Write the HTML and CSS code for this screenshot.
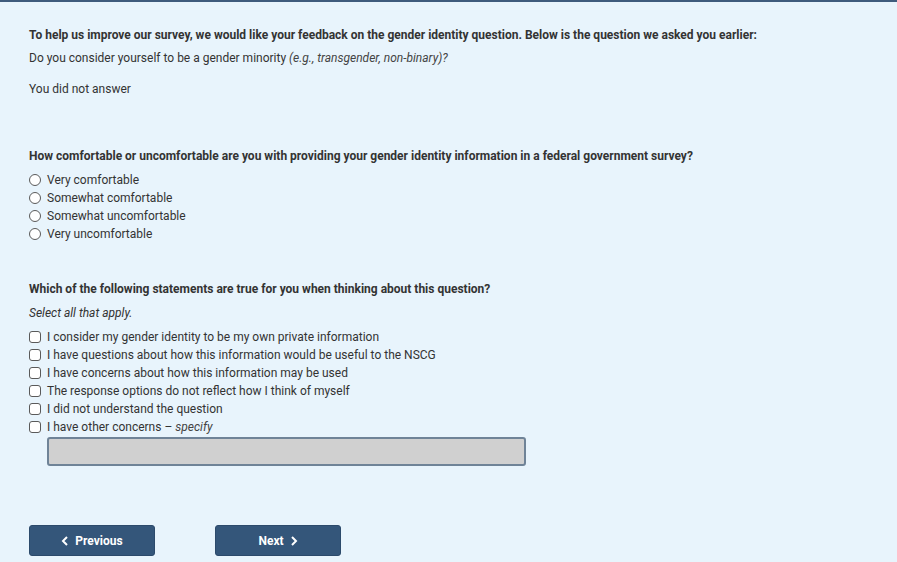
FILE: index.html
```html
<!DOCTYPE html>
<html lang="en">
<head>
    <meta charset="UTF-8">
    <meta name="viewport" content="width=device-width, initial-scale=1.0">
    <title>Gender Identity Feedback</title>
    <link rel="stylesheet" href="styles.css">
</head>
<body>
    <div class="page">
        <p class="intro">To help us improve our survey, we would like your feedback on the gender identity question. Below is the question we asked you earlier:</p>
        <p class="asked">Do you consider yourself to be a gender minority <em>(e.g., transgender, non-binary)?</em></p>
        <p class="answer">You did not answer</p>

        <p class="question q-comfort">How comfortable or uncomfortable are you with providing your gender identity information in a federal government survey?</p>
        <div class="options">
            <label class="option"><input type="radio" name="comfort"><span>Very comfortable</span></label>
            <label class="option"><input type="radio" name="comfort"><span>Somewhat comfortable</span></label>
            <label class="option"><input type="radio" name="comfort"><span>Somewhat uncomfortable</span></label>
            <label class="option"><input type="radio" name="comfort"><span>Very uncomfortable</span></label>
        </div>

        <p class="question q-statements">Which of the following statements are true for you when thinking about this question?</p>
        <p class="hint">Select all that apply.</p>
        <div class="options">
            <label class="option"><input type="checkbox"><span>I consider my gender identity to be my own private information</span></label>
            <label class="option"><input type="checkbox"><span>I have questions about how this information would be useful to the NSCG</span></label>
            <label class="option"><input type="checkbox"><span>I have concerns about how this information may be used</span></label>
            <label class="option"><input type="checkbox"><span>The response options do not reflect how I think of myself</span></label>
            <label class="option"><input type="checkbox"><span>I did not understand the question</span></label>
            <label class="option"><input type="checkbox"><span>I have other concerns &ndash; <em>specify</em></span></label>
        </div>
        <input type="text" class="specify" disabled>

        <div class="nav">
            <button class="nav-btn">
                <svg width="8" height="10" viewBox="0 0 8 10"><path d="M6 1 L2 5 L6 9" fill="none" stroke="#fff" stroke-width="2"/></svg>
                Previous
            </button>
            <button class="nav-btn">
                Next
                <svg width="8" height="10" viewBox="0 0 8 10"><path d="M2 1 L6 5 L2 9" fill="none" stroke="#fff" stroke-width="2"/></svg>
            </button>
        </div>
    </div>
</body>
</html>
```

FILE: styles.css
```css
html, body {
    height: 100%;
}

body {
    margin: 0;
    border-top: 2px solid #3e5b7c;
    background-color: #e8f4fc;
    font-family: Roboto, "Liberation Sans", Arial, sans-serif;
    font-size: 12px;
    color: #333;
    box-sizing: border-box;
}

.page {
    padding: 24px 29px 0 29px;
}

p {
    margin: 0;
    line-height: 18px;
}

em {
    color: #444;
}

.intro {
    font-weight: bold;
}

.asked {
    margin-top: 5px;
}

.answer {
    margin-top: 13px;
}

.question {
    font-weight: bold;
}

.q-comfort {
    margin-top: 49px;
}

.q-statements {
    margin-top: 37px;
}

.hint {
    margin-top: 6px;
    font-style: italic;
}

.options {
    margin-top: 6px;
    display: flex;
    flex-direction: column;
}

.option {
    display: flex;
    align-items: center;
    gap: 6px;
    height: 18px;
}

.option input {
    margin: 0;
    width: 12px;
    height: 12px;
    appearance: none;
    border: 1.5px solid #5a5a5a;
    background: #fff;
    box-sizing: border-box;
}

.option input[type="radio"] {
    border-radius: 50%;
}

.option input[type="checkbox"] {
    border-radius: 3px;
}

.specify {
    display: block;
    margin: 1px 0 0 18px;
    width: 479px;
    height: 29px;
    box-sizing: border-box;
    border: 2px solid #6f8397;
    border-radius: 3px;
    background-color: #d0d0d0;
}

.nav {
    margin-top: 59px;
    display: flex;
    gap: 60px;
}

.nav-btn {
    width: 126px;
    height: 31px;
    background-color: #34567a;
    border: 1px solid #2c4a6b;
    border-radius: 3px;
    color: #fff;
    font-family: Roboto, "Liberation Sans", Arial, sans-serif;
    font-size: 12px;
    font-weight: bold;
    display: flex;
    align-items: center;
    justify-content: center;
    gap: 6px;
}
```
